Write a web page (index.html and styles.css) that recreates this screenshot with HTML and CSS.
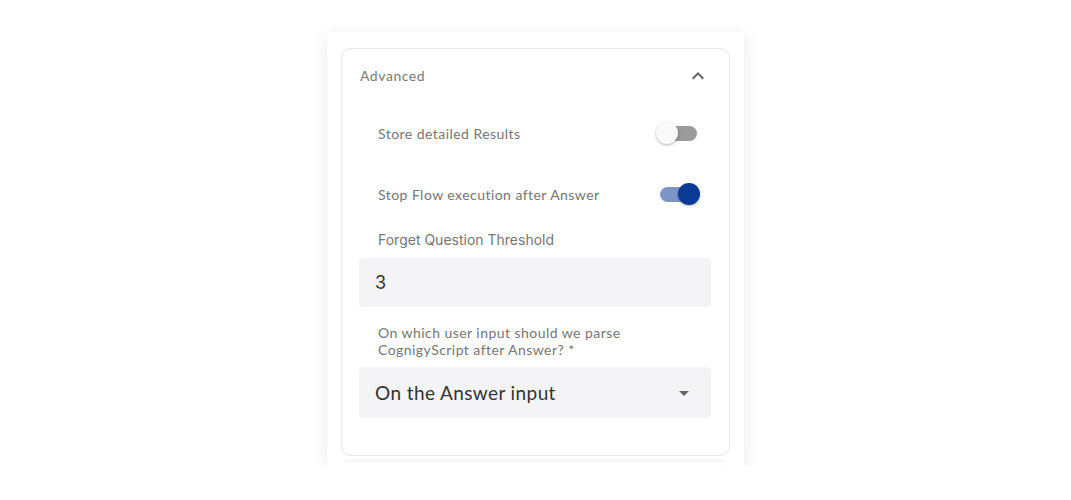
FILE: index.html
```html
<!DOCTYPE html>
<html>
<head>
<meta charset="utf-8">
<link rel="stylesheet" href="styles.css">
</head>
<body>
<div class="card">
  <div class="panel">
    <div class="panel-header">
      <span class="panel-title">Advanced</span>
      <svg class="chevron" viewBox="0 0 24 24" width="24" height="24"><path d="M12 8l-6 6 1.41 1.41L12 10.83l4.59 4.58L18 14z"/></svg>
    </div>
    <div class="panel-body">
      <div class="switch-row row1">
        <span class="label">Store detailed Results</span>
        <span class="switch"><span class="track"></span><span class="thumb"></span></span>
      </div>
      <div class="switch-row row2">
        <span class="label">Stop Flow execution after Answer</span>
        <span class="switch on"><span class="track"></span><span class="thumb"></span></span>
      </div>
      <div class="field-label first">Forget Question Threshold</div>
      <div class="input">3</div>
      <div class="field-label second">On which user input should we parse<br>CognigyScript after Answer? *</div>
      <div class="select">
        <span>On the Answer input</span>
        <svg class="caret" viewBox="0 0 24 24" width="24" height="24"><path d="M7 10l5 5 5-5z"/></svg>
      </div>
    </div>
  </div>
  <div class="next"></div>
</div>
</body>
</html>
```
FILE: styles.css
```css
html, body {
  margin: 0;
  padding: 0;
  background: #ffffff;
}
body {
  padding-top: 32px;
  font-family: "Lato", "Open Sans", sans-serif;
}
.card {
  width: 417px;
  height: 433px;
  margin: 0 0 0 327px;
  background: #fff;
  box-shadow: 0 4px 16px rgba(0,0,0,0.09);
  padding: 16px 14px 0 14px;
  box-sizing: border-box;
  overflow: hidden;
}
.panel {
  border: 1px solid #e8e8e8;
  border-radius: 10px;
  height: 408px;
  box-sizing: border-box;
}
.panel-header {
  height: 53px;
  display: flex;
  align-items: center;
  justify-content: space-between;
  padding: 0 19px 0 18px;
}
.panel-title {
  font-size: 14px;
  color: #7a7a7a;
  letter-spacing: 0.55px;
}
.chevron { fill: #5f5f5f; }
.panel-body {
  padding: 0 18px 0 17px;
}
.switch-row {
  display: flex;
  align-items: center;
  justify-content: space-between;
  padding: 0 11px 0 19px;
}
.row1 { height: 62px; }
.row2 { height: 60px; }
.label, .field-label {
  font-size: 14px;
  color: #767676;
  letter-spacing: 0.45px;
}
.switch {
  position: relative;
  width: 44px;
  height: 22px;
}
.track {
  position: absolute;
  left: 4px;
  top: 4px;
  width: 37px;
  height: 15px;
  border-radius: 8px;
  background: #9b9b9b;
}
.thumb {
  position: absolute;
  left: 0;
  top: 0;
  width: 22px;
  height: 22px;
  border-radius: 50%;
  background: #fafafa;
  box-shadow: 0 1px 3px rgba(0,0,0,0.3);
}
.switch.on .track { background: #7d94c9; }
.switch.on .thumb {
  left: 22px;
  background: #0b3a94;
}
.field-label {
  padding-left: 19px;
}
.field-label.first {
  line-height: 20px;
  margin-top: 6px;
  margin-bottom: 8px;
  font-family: "Inter", sans-serif;
  letter-spacing: 0;
}
.field-label.second {
  line-height: 17px;
  margin-top: 17px;
  margin-bottom: 9px;
}
.input, .select {
  background: #f4f4f6;
  border-radius: 4px;
  color: #333;
  display: flex;
  align-items: center;
  padding-left: 16px;
  box-sizing: border-box;
}
.input {
  height: 49px;
  font-size: 18px;
  font-family: "Inter", sans-serif;
}
.select {
  height: 51px;
  font-size: 19px;
  letter-spacing: 0.4px;
  justify-content: space-between;
  padding-right: 15px;
}
.caret { fill: #666; }
.next {
  height: 20px;
  margin: 6px 5px 0 5px;
  box-shadow: 0 -1px 4px rgba(0,0,0,0.08);
  background: #fff;
}
```
